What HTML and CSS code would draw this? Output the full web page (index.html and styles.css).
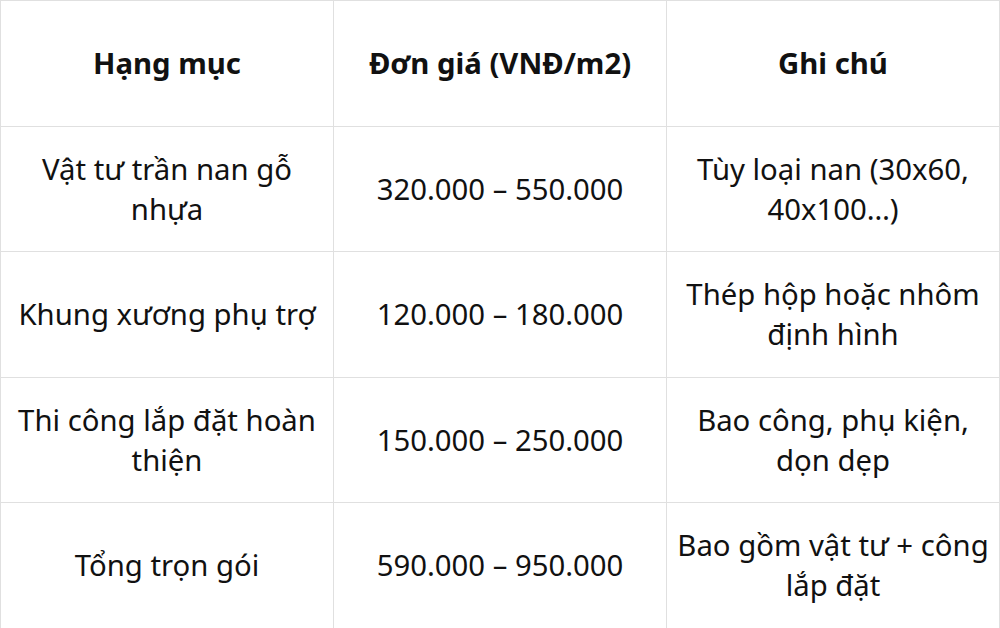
FILE: index.html
```html
<!DOCTYPE html>
<html lang="vi">
<head>
<meta charset="utf-8">
<link rel="stylesheet" href="styles.css">
</head>
<body>
<table class="price-table">
  <thead>
    <tr><th>Hạng mục</th><th>Đơn giá (VNĐ/m2)</th><th>Ghi chú</th></tr>
  </thead>
  <tbody>
    <tr><td>Vật tư trần nan gỗ nhựa</td><td>320.000 – 550.000</td><td>Tùy loại nan (30x60, 40x100…)</td></tr>
    <tr><td>Khung xương phụ trợ</td><td>120.000 – 180.000</td><td>Thép hộp hoặc nhôm định hình</td></tr>
    <tr><td>Thi công lắp đặt hoàn thiện</td><td>150.000 – 250.000</td><td>Bao công, phụ kiện, dọn dẹp</td></tr>
    <tr><td>Tổng trọn gói</td><td>590.000 – 950.000</td><td>Bao gồm vật tư + công lắp đặt</td></tr>
  </tbody>
</table>
</body>
</html>
```

FILE: styles.css
```css
html, body {
  margin: 0;
  padding: 0;
  background: #fff;
}
.price-table {
  width: 1000px;
  border-collapse: collapse;
  table-layout: fixed;
  font-family: "Noto Sans", "Open Sans", sans-serif;
  font-size: 29.3px;
  line-height: 40px;
  color: #111;
}
.price-table th,
.price-table td {
  border: 1px solid #e0e0e0;
  padding: 0 10px;
  text-align: center;
  vertical-align: middle;
  height: 124.5px;
}
.price-table th {
  font-weight: 700;
}
```
